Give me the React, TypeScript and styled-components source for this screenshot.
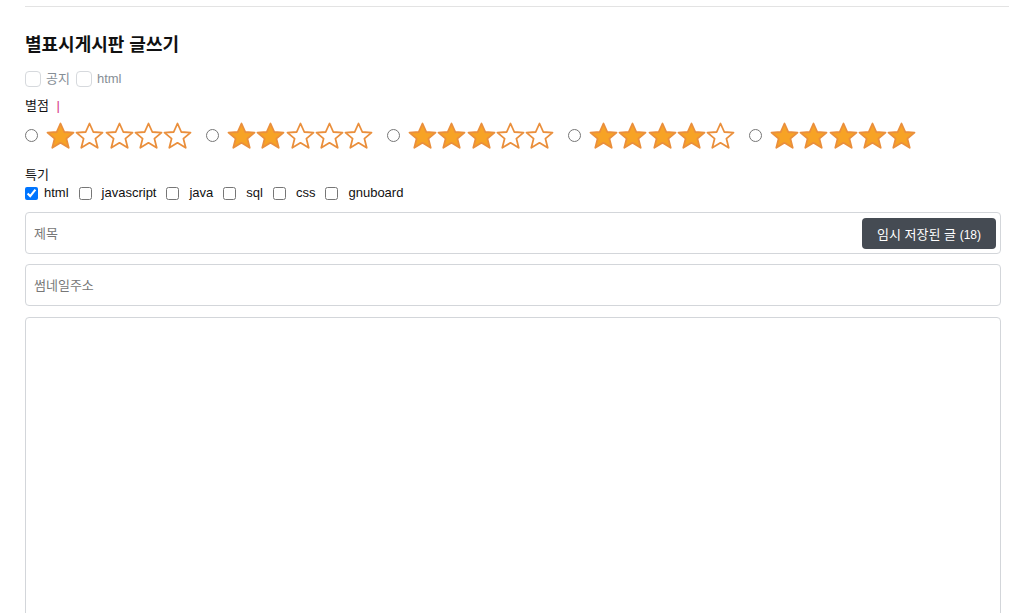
import React from 'react'
import styled, { createGlobalStyle } from 'styled-components'

const GlobalStyle = createGlobalStyle`
    body {
        margin: 0;
        background: #fff;
        font-family: "Liberation Sans", "Noto Sans CJK KR", sans-serif;
        color: #212529;
    }
`

const ratings = [1, 2, 3, 4, 5]
const skills = ['html', 'javascript', 'java', 'sql', 'css', 'gnuboard']

const Star = function ({ filled }: { filled: boolean }): JSX.Element {
    return (
        <svg width="29" height="28" viewBox="0 0 29 28">
            <polygon
                points="14.5,1.5 18.3,10 27.5,10.6 20.4,16.6 22.7,25.8 14.5,20.8 6.3,25.8 8.6,16.6 1.5,10.6 10.7,10"
                fill={filled ? '#f7a325' : '#fff'}
                stroke="#ea8f3c"
                strokeWidth="1.8"
                strokeLinejoin="round"
            />
        </svg>
    )
}

const App = function (): JSX.Element {
    return (
        <StyledPage>
            <GlobalStyle />
            <Heading>별표시게시판 글쓰기</Heading>
            <OptionRow>
                <BoxLabel>
                    <BoxCheck type="checkbox" />
                    공지
                </BoxLabel>
                <BoxLabel>
                    <BoxCheck type="checkbox" />
                    html
                </BoxLabel>
            </OptionRow>
            <FieldTitle>
                별점 <Required>|</Required>
            </FieldTitle>
            <StarRow>
                {ratings.map(score => (
                    <StarOption key={score}>
                        <input type="radio" name="rating" />
                        <Stars>
                            {ratings.map(n => (
                                <Star key={n} filled={n <= score} />
                            ))}
                        </Stars>
                    </StarOption>
                ))}
            </StarRow>
            <FieldTitle $top={16}>특기</FieldTitle>
            <SkillRow>
                {skills.map((skill, i) => (
                    <SkillLabel key={skill}>
                        <input type="checkbox" defaultChecked={i === 0} />
                        {skill}
                    </SkillLabel>
                ))}
            </SkillRow>
            <InputBox>
                <TextInput placeholder="제목" />
                <DraftButton type="button">
                    임시 저장된 글 <small>(18)</small>
                </DraftButton>
            </InputBox>
            <InputBox>
                <TextInput placeholder="썸네일주소" />
            </InputBox>
            <Editor />
        </StyledPage>
    )
}

export default App

const StyledPage = styled.div`
    margin-left: 25px;
    padding-top: 6px;
    padding-right: 8px;
    &::before {
        content: '';
        display: block;
        height: 1px;
        margin-right: -8px;
        background: #e3e3e3;
    }
`

const Heading = styled.h1`
    margin: 27px 0 0;
    font-size: 18px;
    font-weight: 700;
    line-height: 22px;
    color: #111;
`

const OptionRow = styled.div`
    display: flex;
    gap: 6px;
    margin-top: 14px;
`

const BoxLabel = styled.label`
    display: flex;
    align-items: center;
    gap: 5px;
    font-size: 13px;
    color: #868e96;
    line-height: 18px;
`

const BoxCheck = styled.input`
    appearance: none;
    margin: 0;
    width: 16px;
    height: 16px;
    border: 1px solid #d6d9dd;
    border-radius: 4px;
    background: #fff;
`

const FieldTitle = styled.div<{ $top?: number }>`
    margin-top: ${p => p.$top ?? 9}px;
    font-size: 13px;
    line-height: 18px;
    color: #111;
`

const Required = styled.span`
    color: #d63384;
    margin-left: 4px;
`

const StarRow = styled.div`
    display: flex;
    gap: 14px;
    margin-top: 7px;
`

const StarOption = styled.label`
    display: flex;
    align-items: center;
    gap: 8px;
    input {
        margin: 0;
        width: 13px;
        height: 13px;
        position: relative;
        top: -1px;
    }
`

const Stars = styled.span`
    display: flex;
    width: 146px;
    justify-content: space-between;
`

const SkillRow = styled.div`
    display: flex;
    gap: 10px;
`

const SkillLabel = styled.label`
    display: flex;
    align-items: center;
    gap: 6px;
    font-size: 13px;
    line-height: 18px;
    color: #111;
    input {
        margin: 0 4px 0 0;
        width: 13px;
        height: 13px;
    }
    &:first-child input {
        margin-right: 0;
    }
`

const InputBox = styled.div`
    display: flex;
    align-items: center;
    width: 976px;
    height: 42px;
    box-sizing: border-box;
    margin-top: 10px;
    padding: 0 4px 0 6px;
    border: 1px solid #d3d6da;
    border-radius: 4px;
`

const TextInput = styled.input`
    flex: 1;
    border: 0;
    outline: none;
    font-size: 13px;
    font-family: "Liberation Sans", "Noto Sans CJK KR", sans-serif;
    &::placeholder {
        color: #777;
    }
`

const DraftButton = styled.button`
    height: 31px;
    padding: 0 15px;
    border: 0;
    border-radius: 4px;
    background: #454b53;
    color: #fff;
    font-size: 13px;
    font-family: "Liberation Sans", "Noto Sans CJK KR", sans-serif;
    small {
        font-size: 12px;
    }
`

const Editor = styled.div`
    width: 976px;
    height: 320px;
    box-sizing: border-box;
    margin-top: 11px;
    border: 1px solid #d3d6da;
    border-radius: 4px;
`
